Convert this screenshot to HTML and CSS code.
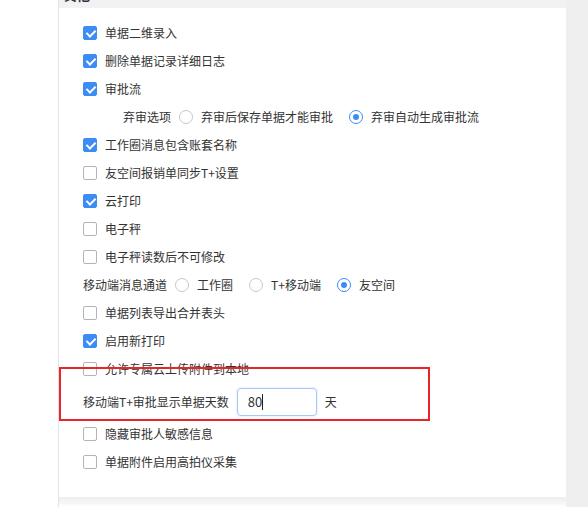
FILE: index.html
```html
<!DOCTYPE html>
<html>
	<head>
		<meta charset="utf-8" />
		<title>设置</title>
		<link rel="stylesheet" href="styles.css">
	</head>
	<body>
<div class="page">
    <div class="side"></div>
    <div class="main">
        <div class="head"><span>其他</span></div>
        <div class="panel">
            <div class="row"><i class="cb on"></i><span>单据二维录入</span></div>
            <div class="row"><i class="cb on"></i><span>删除单据记录详细日志</span></div>
            <div class="row"><i class="cb on"></i><span>审批流</span></div>
            <div class="row sub">
                <span>弃审选项</span>
                <i class="rd"></i><span>弃审后保存单据才能审批</span>
                <i class="rd on next"></i><span>弃审自动生成审批流</span>
            </div>
            <div class="row"><i class="cb on"></i><span>工作圈消息包含账套名称</span></div>
            <div class="row"><i class="cb"></i><span>友空间报销单同步T+设置</span></div>
            <div class="row"><i class="cb on"></i><span>云打印</span></div>
            <div class="row"><i class="cb"></i><span>电子秤</span></div>
            <div class="row"><i class="cb"></i><span>电子秤读数后不可修改</span></div>
            <div class="row">
                <span>移动端消息通道</span>
                <i class="rd"></i><span>工作圈</span>
                <i class="rd next"></i><span>T+移动端</span>
                <i class="rd on next"></i><span>友空间</span>
            </div>
            <div class="row"><i class="cb"></i><span>单据列表导出合并表头</span></div>
            <div class="row"><i class="cb on"></i><span>启用新打印</span></div>
            <div class="row"><i class="cb"></i><span>允许专属云上传附件到本地</span></div>
            <div class="row field">
                <span>移动端T+审批显示单据天数</span>
                <div class="input">80<b class="caret"></b></div>
                <span>天</span>
            </div>
            <div class="row"><i class="cb"></i><span>隐藏审批人敏感信息</span></div>
            <div class="row"><i class="cb"></i><span>单据附件启用高拍仪采集</span></div>
        </div>
        <div class="foot"></div>
    </div>
    <div class="scroll"></div>
    <div class="mark"></div>
</div>
	</body>
</html>
```

FILE: styles.css
```css
* {
    margin: 0;
    padding: 0;
    box-sizing: border-box;
}
body {
    font-family: "Noto Sans CJK SC", "Noto Sans", sans-serif;
    font-size: 12px;
    color: #333;
    background: #fff;
}
.page {
    position: relative;
    display: flex;
    width: 588px;
    height: 507px;
    overflow: hidden;
}
.side {
    width: 59px;
    border-right: 1px solid #e3e3e6;
}
.main {
    flex: 1;
    display: flex;
    flex-direction: column;
}
.head {
    height: 8px;
    overflow: hidden;
    background: #f2f2f5;
    padding-left: 5px;
}
.head span {
    display: block;
    margin-top: -13px;
    font-size: 13px;
    line-height: 16px;
    font-weight: bold;
}
.panel {
    flex: 1;
    padding: 11px 0 0 24px;
}
.row {
    display: flex;
    align-items: center;
    height: 28px;
    gap: 8px;
    line-height: 16px;
}
.row.sub {
    padding-left: 40px;
}
.row.field {
    height: 37px;
}
.cb {
    width: 14px;
    height: 14px;
    border: 1px solid #b4b4b4;
    border-radius: 2px;
    background: #fff;
    position: relative;
}
.cb.on {
    border-color: #3c8cf5;
    background: #3c8cf5;
}
.cb.on:after {
    content: "";
    position: absolute;
    left: 3.5px;
    top: 1px;
    width: 4px;
    height: 7px;
    border: solid #fff;
    border-width: 0 2px 2px 0;
    transform: rotate(45deg);
}
.rd {
    width: 14px;
    height: 14px;
    border: 1px solid #c8c8c8;
    border-radius: 50%;
    position: relative;
}
.rd.next {
    margin-left: 8px;
}
.rd.on {
    border-color: #3c8cf5;
}
.rd.on:after {
    content: "";
    position: absolute;
    left: 3px;
    top: 3px;
    width: 6px;
    height: 6px;
    border-radius: 50%;
    background: #3c8cf5;
}
.input {
    width: 80px;
    height: 28px;
    border: 1px solid #a8c8f4;
    border-radius: 4px;
    box-shadow: 0 0 2px rgba(60, 140, 245, 0.35);
    padding-left: 10px;
    display: flex;
    align-items: center;
    font-size: 13px;
}
.caret {
    width: 1px;
    height: 16px;
    background: #222;
}
.foot {
    height: 10px;
    background: linear-gradient(#eeeeee, #f6f6f6 60%, #fff);
}
.scroll {
    width: 22px;
    background: #efefef;
}
.mark {
    position: absolute;
    left: 59px;
    top: 367px;
    width: 371px;
    height: 54px;
    border: 2px solid #e8262a;
}
```
